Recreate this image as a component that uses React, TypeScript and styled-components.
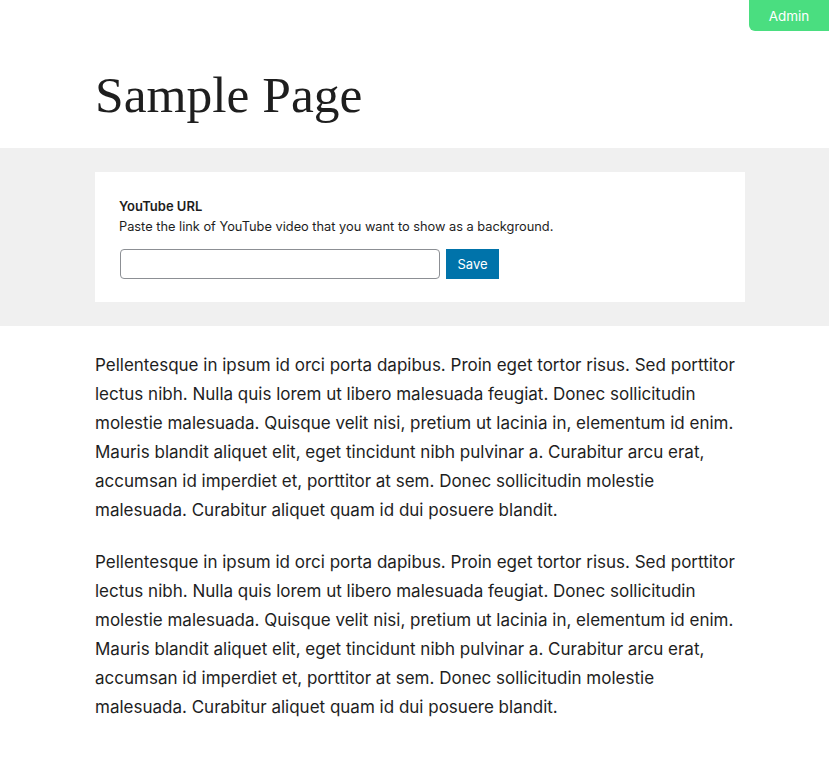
import React from "react";
import styled, { createGlobalStyle } from "styled-components";

const Global = createGlobalStyle`
  html, body { margin: 0; padding: 0; background: #fff; }
  body { font-family: Inter, "Noto Sans", sans-serif; color: #1e1e1e; }
`;

const Page = styled.div`
  position: relative;
  width: 100%;
  min-height: 781px;
`;

const AdminButton = styled.button`
  position: absolute;
  top: 0;
  right: 0;
  width: 80px;
  height: 31px;
  border: none;
  border-radius: 0 0 0 6px;
  background: #4ade80;
  color: #fff;
  font-family: Inter, sans-serif;
  font-size: 13.5px;
  cursor: pointer;
`;

const Header = styled.header`
  padding: 64px 0 23px 95px;
`;

const Title = styled.h1`
  margin: 0;
  font-family: "Liberation Serif", "DejaVu Serif", serif;
  font-weight: 400;
  font-size: 51.5px;
  line-height: 61px;
  color: #1e1e1e;
`;

const Band = styled.section`
  background: #f0f0f0;
  padding: 24px 84px 24px 95px;
`;

const Card = styled.div`
  background: #fff;
  padding: 24px 24px 23px;
  max-width: 650px;
  box-sizing: border-box;
`;

const Label = styled.label`
  display: block;
  font-size: 13px;
  line-height: 20px;
  font-weight: 600;
  color: #1e1e1e;
`;

const Help = styled.p`
  margin: 0;
  font-size: 12.8px;
  line-height: 21px;
  color: #1e1e1e;
`;

const Row = styled.div`
  display: flex;
  gap: 6px;
  margin-top: 12px;
  padding-left: 1px;
`;

const UrlInput = styled.input`
  width: 320px;
  height: 30px;
  box-sizing: border-box;
  border: 1px solid #8c8f94;
  border-radius: 4px;
  background: #fff;
  font-size: 13px;
  padding: 0 8px;
`;

const SaveButton = styled.button`
  width: 53px;
  height: 30px;
  border: none;
  border-radius: 0;
  background: #0073aa;
  color: #fff;
  font-family: Inter, sans-serif;
  font-size: 13px;
  cursor: pointer;
`;

const Content = styled.main`
  padding: 25px 84px 40px 95px;
  max-width: 650px;
`;

const Para = styled.p`
  margin: 0 0 23px;
  font-size: 17px;
  line-height: 29px;
  color: #1e1e1e;
`;

const text =
  "Pellentesque in ipsum id orci porta dapibus. Proin eget tortor risus. Sed porttitor lectus nibh. Nulla quis lorem ut libero malesuada feugiat. Donec sollicitudin molestie malesuada. Quisque velit nisi, pretium ut lacinia in, elementum id enim. Mauris blandit aliquet elit, eget tincidunt nibh pulvinar a. Curabitur arcu erat, accumsan id imperdiet et, porttitor at sem. Donec sollicitudin molestie malesuada. Curabitur aliquet quam id dui posuere blandit.";

export default function App() {
  return (
    <Page>
      <Global />
      <AdminButton>Admin</AdminButton>
      <Header>
        <Title>Sample Page</Title>
      </Header>
      <Band>
        <Card>
          <Label htmlFor="yt">YouTube URL</Label>
          <Help>Paste the link of YouTube video that you want to show as a background.</Help>
          <Row>
            <UrlInput id="yt" type="text" />
            <SaveButton>Save</SaveButton>
          </Row>
        </Card>
      </Band>
      <Content>
        <Para>{text}</Para>
        <Para>{text}</Para>
      </Content>
    </Page>
  );
}
